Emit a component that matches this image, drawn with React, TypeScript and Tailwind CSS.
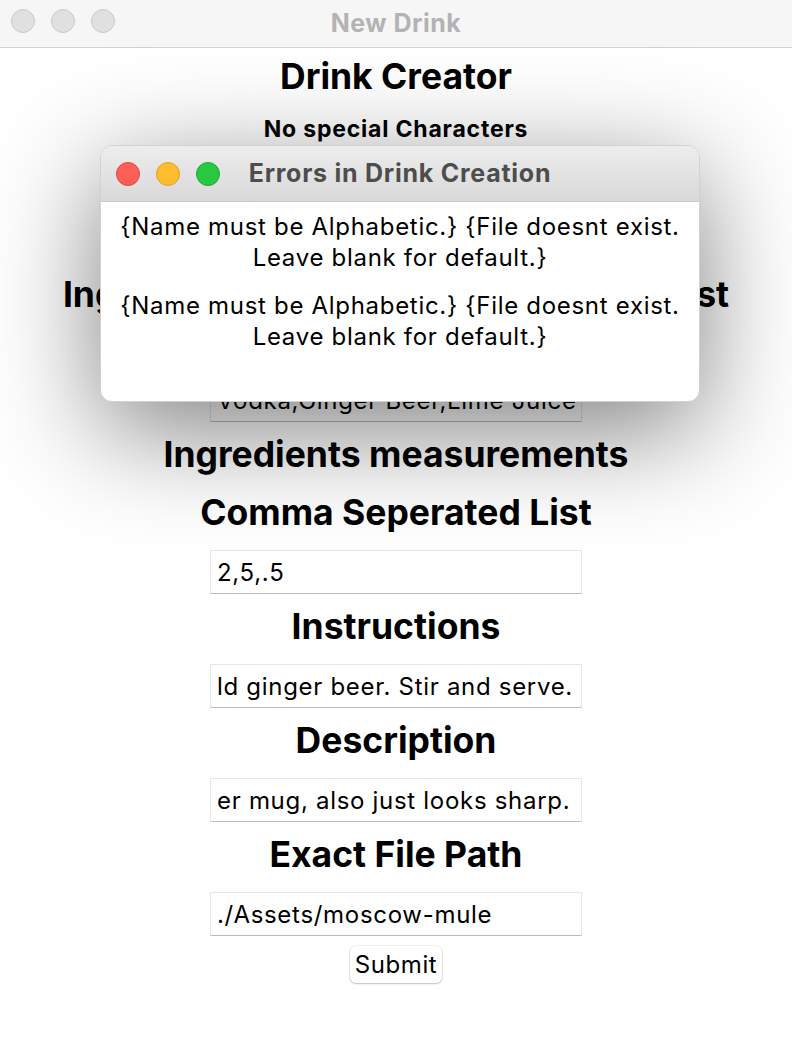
const font = "font-['Inter','Liberation_Sans',sans-serif]"

const Light = ({ color }: { color: string }) => (
    <span className={`block size-[24px] rounded-full border ${color}`} />
)

const Heading = ({ children }: { children: React.ReactNode }) => (
    <h2 className="text-[35.5px] font-bold leading-[58px] whitespace-nowrap text-black">
        {children}
    </h2>
)

const Note = ({ children }: { children: React.ReactNode }) => (
    <p className="text-[23px] font-bold leading-[46px] tracking-[0.8px] text-black">{children}</p>
)

const Field = ({ value }: { value: string }) => (
    <div className="mt-2 mb-1 h-[44px] w-[372px] overflow-hidden whitespace-nowrap border border-[#e6e6e6] border-b-[#bcbcbc] bg-white px-[6px] text-[24px] leading-[44px] tracking-[0.7px] text-black">
        {value}
    </div>
)

const ErrorDialog = () => (
    <div className="absolute left-[100px] top-[145px] flex h-[257px] w-[600px] flex-col overflow-hidden rounded-[12px] border border-[#d2d2d2] bg-white shadow-[0_28px_110px_rgba(0,0,0,0.5)]">
        <div className="relative flex h-[56px] items-center justify-center border-b border-[#c9c9c9] bg-gradient-to-b from-[#ededed] to-[#d9d9d9]">
            <div className="absolute left-[15px] top-[16px] flex gap-[16px]">
                <Light color="bg-[#fe5f57] border-[#e0443e]" />
                <Light color="bg-[#febc2e] border-[#dea123]" />
                <Light color="bg-[#28c840] border-[#1aab29]" />
            </div>
            <span className="text-[25px] font-bold tracking-[0.75px] text-[#4d4d4d]">
                Errors in Drink Creation
            </span>
        </div>
        <div className="flex flex-col gap-[17px] px-1 pt-[9px] text-center text-[24px] leading-[31px] tracking-[0.7px] text-black">
            <p>
                {'{Name must be Alphabetic.} {File doesnt exist.'}
                <br />
                {'Leave blank for default.}'}
            </p>
            <p>
                {'{Name must be Alphabetic.} {File doesnt exist.'}
                <br />
                {'Leave blank for default.}'}
            </p>
        </div>
    </div>
)

export default function App() {
    return (
        <div className={`relative h-[1043px] w-[792px] overflow-hidden bg-white ${font}`}>
            <header className="relative flex h-12 items-center justify-center border-b border-[#d3d3d3] bg-[#f6f6f6]">
                <div className="absolute left-[11px] top-[9px] flex gap-[16px]">
                    <span className="block size-[24px] rounded-full border border-[#cacaca] bg-[#e0e0e0]" />
                    <span className="block size-[24px] rounded-full border border-[#cacaca] bg-[#e0e0e0]" />
                    <span className="block size-[24px] rounded-full border border-[#cacaca] bg-[#e0e0e0]" />
                </div>
                <span className="text-[25px] font-bold tracking-[0.5px] text-[#b3b3b3]">New Drink</span>
            </header>

            <main className="flex flex-col items-center">
                <Heading>Drink Creator</Heading>
                <Note>No special Characters</Note>
                <Field value="Moscow Mule" />
                <Heading>Ingredients</Heading>
                <Heading>Ingredients in a Comma Seperated List</Heading>
                <Note>No special Characters</Note>
                <Field value="Vodka,Ginger Beer,Lime Juice" />
                <Heading>Ingredients measurements</Heading>
                <Heading>Comma Seperated List</Heading>
                <Field value="2,5,.5" />
                <Heading>Instructions</Heading>
                <Field value="ld ginger beer. Stir and serve." />
                <Heading>Description</Heading>
                <Field value="er mug, also just looks sharp." />
                <Heading>Exact File Path</Heading>
                <Field value="./Assets/moscow-mule" />
                <button className="mt-[6px] h-[37px] rounded-[6px] bg-white px-[5px] text-[24px] tracking-[0.6px] text-black shadow-[0_0_0_1px_rgba(0,0,0,0.06),0_1px_2px_rgba(0,0,0,0.2)]">
                    Submit
                </button>
            </main>

            <ErrorDialog />
        </div>
    )
}
